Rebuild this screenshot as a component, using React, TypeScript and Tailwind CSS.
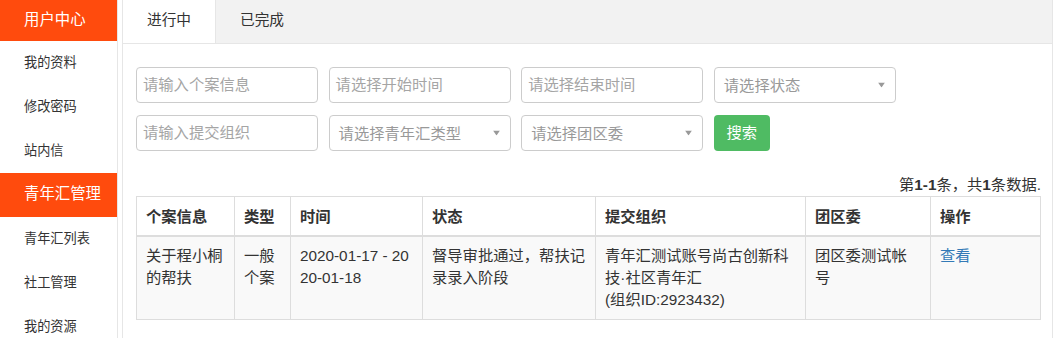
import React from "react";

const FONT = '"Liberation Sans", "Noto Sans CJK SC", Arial, sans-serif';

const groups = [
  { title: "用户中心", items: ["我的资料", "修改密码", "站内信"] },
  { title: "青年汇管理", items: ["青年汇列表", "社工管理", "我的资源"] },
];

function Arrow() {
  return (
    <svg width="7" height="5" viewBox="0 0 7 5" className="absolute right-[10px] top-1/2 -translate-y-1/2">
      <path d="M0 0h7L3.5 5z" fill="#999" />
    </svg>
  );
}

function TextInput({ placeholder }: { placeholder: string }) {
  return (
    <div className="h-[36px] border border-[#ccc] rounded-[4px] bg-white flex items-center pl-[6px] text-[15.3px] text-[#a5a5a5]">
      {placeholder}
    </div>
  );
}

function SelectInput({ placeholder }: { placeholder: string }) {
  return (
    <div className="relative h-[36px] border border-[#ccc] rounded-[4px] bg-white flex items-center pl-[9px] pt-[2px] text-[15.3px] text-[#999]">
      {placeholder}
      <Arrow />
    </div>
  );
}

const cols = [98, 56, 132, 173, 210, 125, 110];
const heads = ["个案信息", "类型", "时间", "状态", "提交组织", "团区委", "操作"];

export default function App() {
  return (
    <div className="flex w-[1056px] h-[338px] overflow-hidden bg-white text-[#333]" style={{ fontFamily: FONT }}>
      <aside className="w-[118px] shrink-0 border-r border-[#e6e6e6]">
        {groups.map((g, i) => (
          <div key={g.title}>
            <div
              className={
                (i === 0 ? "h-[41px] " : "h-[44px] ") +
                "bg-[#ff4b0d] text-white text-[15.4px] flex items-center pl-[24px] pb-[2px]"
              }
            >
              {g.title}
            </div>
            {g.items.map((it) => (
              <div key={it} className="h-[44px] flex items-center pl-[24px] text-[13.2px] text-[#333]">
                {it}
              </div>
            ))}
          </div>
        ))}
      </aside>

      <main className="ml-[4px] w-[931px] shrink-0 border-x border-[#e6e6e6] h-[338px]">
        <div className="flex h-[44px] bg-[#f2f2f2] border-b border-[#e6e6e6] text-[14.7px]">
          <div className="w-[93px] bg-white border-r border-[#e6e6e6] flex items-center justify-center pb-[2px]">
            进行中
          </div>
          <div className="w-[92px] flex items-center justify-center pb-[2px]">已完成</div>
        </div>

        <div className="pl-[13px] pr-[12px] pt-[23px]">
          <div className="grid grid-cols-[repeat(4,182px)] gap-x-[10.6px] gap-y-[12px]">
            <TextInput placeholder="请输入个案信息" />
            <TextInput placeholder="请选择开始时间" />
            <TextInput placeholder="请选择结束时间" />
            <SelectInput placeholder="请选择状态" />
            <TextInput placeholder="请输入提交组织" />
            <SelectInput placeholder="请选择青年汇类型" />
            <SelectInput placeholder="请选择团区委" />
            <div>
              <button className="h-[36px] w-[56px] rounded-[4px] bg-[#4fbb63] text-white text-[15.3px] flex items-center justify-center">
                搜索
              </button>
            </div>
          </div>

          <div className="mt-[23px] h-[22px] leading-[22px] text-right text-[15.3px] -mr-[1px]">
            第<b>1-1</b>条，共<b>1</b>条数据.
          </div>

          <table className="table-fixed border-collapse w-[904px] text-[15.3px] leading-[22px]">
            <colgroup>
              {cols.map((w, i) => (
                <col key={i} style={{ width: w }} />
              ))}
            </colgroup>
            <thead>
              <tr>
                {heads.map((h) => (
                  <th
                    key={h}
                    className="border border-[#ddd] border-b-2 text-left font-bold px-[9px] pt-[9px] pb-[7px] whitespace-nowrap"
                  >
                    {h}
                  </th>
                ))}
              </tr>
            </thead>
            <tbody>
              <tr className="bg-[#f9f9f9] align-top">
                <td className="border border-[#ddd] px-[9px] pt-[8px] pb-[30px] whitespace-nowrap">
                  关于程小桐
                  <br />
                  的帮扶
                </td>
                <td className="border border-[#ddd] px-[9px] py-[8px] whitespace-nowrap">
                  一般
                  <br />
                  个案
                </td>
                <td className="border border-[#ddd] px-[9px] py-[8px] whitespace-nowrap">
                  2020-01-17 - 20
                  <br />
                  20-01-18
                </td>
                <td className="border border-[#ddd] px-[9px] py-[8px] whitespace-nowrap">
                  督导审批通过，帮扶记
                  <br />
                  录录入阶段
                </td>
                <td className="border border-[#ddd] px-[9px] py-[8px] whitespace-nowrap">
                  青年汇测试账号尚古创新科
                  <br />
                  技·社区青年汇
                  <br />
                  (组织ID:2923432)
                </td>
                <td className="border border-[#ddd] px-[9px] py-[8px] whitespace-nowrap">
                  团区委测试帐
                  <br />号
                </td>
                <td className="border border-[#ddd] px-[9px] py-[8px] whitespace-nowrap">
                  <a className="text-[#337ab7]">查看</a>
                </td>
              </tr>
            </tbody>
          </table>
        </div>
      </main>
    </div>
  );
}
